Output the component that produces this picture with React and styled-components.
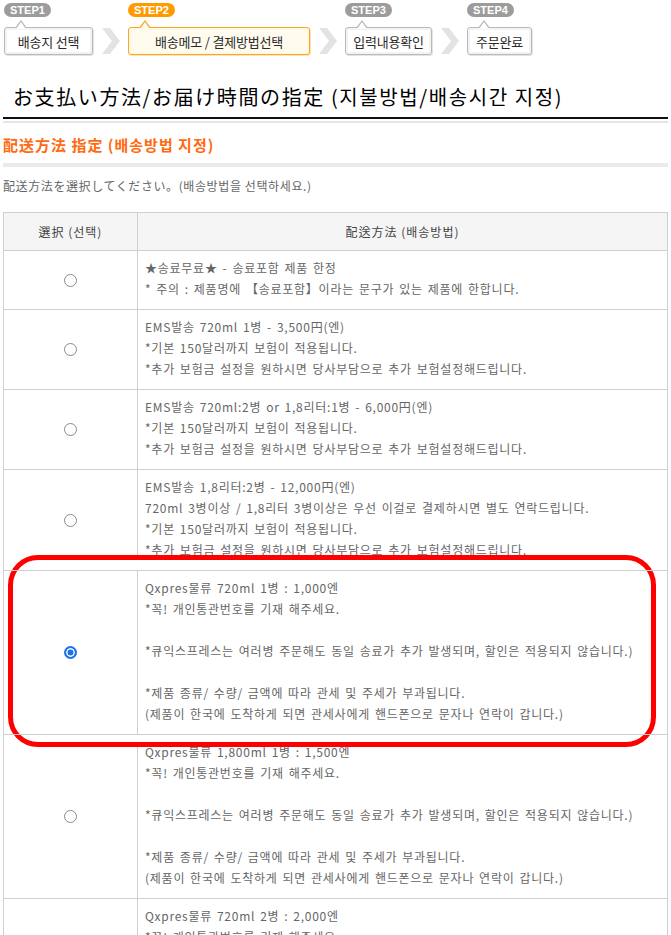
import React from "react";
import styled, { createGlobalStyle, css } from "styled-components";

const Global = createGlobalStyle`
  html, body { margin: 0; padding: 0; background: #fff; }
  body { font-family: "Noto Sans CJK KR", "Noto Sans CJK JP", sans-serif; }
  * { box-sizing: border-box; }
`;

const Page = styled.div`
  padding: 3px 3px 0 3px;
`;

const Steps = styled.div`
  display: flex;
  align-items: flex-end;
  padding-left: 1px;
`;

const Step = styled.div`
  display: flex;
  flex-direction: column;
  align-items: flex-start;
  gap: 10px;
`;

const Pill = styled.span`
  display: inline-block;
  height: 14px;
  line-height: 14px;
  padding: 0 6px;
  border-radius: 7px;
  font-family: "Liberation Sans", Arial, sans-serif;
  font-weight: bold;
  font-size: 11px;
  color: #fff;
  background: ${(p) => (p.$active ? "#ff9a00" : "#9c9c9c")};
`;

const StepBox = styled.div`
  position: relative;
  width: ${(p) => p.$w}px;
  height: 28px;
  border: 1px solid ${(p) => (p.$active ? "#f7a628" : "#b9b9b9")};
  border-radius: 3px;
  background: ${(p) => (p.$active ? "#fffcef" : "#fff")};
  box-shadow: inset 0 0 0 2px ${(p) => (p.$active ? "#fff8e4" : "#f3f3f3")},
    1px 1px 0 ${(p) => (p.$active ? "#fde3b8" : "#e4e4e4")};
  display: flex;
  align-items: center;
  justify-content: center;
  font-size: 13px;
  letter-spacing: -0.2px;
  color: #2a2a2a;
  &::before,
  &::after {
    content: "";
    position: absolute;
    width: 0;
    height: 0;
    border-style: solid;
  }
  &::before {
    left: 10px;
    top: -8px;
    border-width: 0 6px 8px 6px;
    border-color: transparent transparent
      ${(p) => (p.$active ? "#f7a628" : "#b9b9b9")} transparent;
  }
  &::after {
    left: 11px;
    top: -6px;
    border-width: 0 5px 7px 5px;
    border-color: transparent transparent
      ${(p) => (p.$active ? "#fffcef" : "#fff")} transparent;
  }
`;

const Chevron = styled.div`
  width: 35px;
  height: 28px;
  display: flex;
  align-items: center;
  justify-content: center;
`;

const Title = styled.h1`
  margin: 30px 0 0 0;
  padding: 0 0 8px 10px;
  font-family: "Noto Sans CJK JP", "Noto Sans CJK KR", sans-serif;
  font-weight: normal;
  font-size: 20px;
  line-height: 24px;
  letter-spacing: 1.6px;
  color: #000;
  border-bottom: 2px solid #111;
  box-shadow: 0 2px 0 #fff, 0 4px 0 #e6e6e6;
`;

const SubTitle = styled.h2`
  margin: 16px 0 0 0;
  padding: 0 0 8px 0;
  font-family: "Noto Sans CJK JP", "Noto Sans CJK KR", sans-serif;
  font-weight: bold;
  font-size: 15px;
  line-height: 20px;
  letter-spacing: 1px;
  color: #ff6a10;
  border-bottom: 4px solid #ebebeb;
`;

const Desc = styled.p`
  margin: 11px 0 0 0;
  font-family: "Noto Sans CJK JP", "Noto Sans CJK KR", sans-serif;
  font-size: 12px;
  line-height: 16px;
  letter-spacing: 0.6px;
  color: #666;
`;

const Table = styled.div`
  margin-top: 18px;
  border: 1px solid #cfcfcf;
  border-bottom: none;
`;

const Row = styled.div`
  display: grid;
  grid-template-columns: 134px 1fr;
  ${(p) =>
    p.$selected &&
    css`
      position: relative;
      z-index: 1;
      margin-top: -1px;
      & > div {
        border-top: 1px solid #cfcfcf;
      }
      &::before {
        content: "";
        position: absolute;
        z-index: -1;
        top: -15px;
        bottom: -12px;
        left: 4px;
        right: 11px;
        border: 5px solid #ff0000;
        border-radius: 30px;
        background: #fff;
      }
    `}
`;

const HeadCell = styled.div`
  height: 38px;
  display: flex;
  align-items: center;
  justify-content: center;
  background: #f5f5f5;
  border-bottom: 1px solid #cfcfcf;
  border-right: ${(p) => (p.$first ? "1px solid #cfcfcf" : "none")};
  font-size: 12px;
  letter-spacing: 1px;
  color: #444;
`;

const PickCell = styled.div`
  display: flex;
  align-items: center;
  justify-content: center;
  border-right: 1px solid #cfcfcf;
  border-bottom: 1px solid #cfcfcf;
`;

const InfoCell = styled.div`
  padding: 6px 7px 10px 7px;
  border-bottom: 1px solid #cfcfcf;
  font-size: 12px;
  line-height: 21px;
  letter-spacing: 0.75px;
  word-spacing: 1.5px;
  color: #666;
`;

const Line = styled.div`
  height: 21px;
  white-space: nowrap;
`;

const Radio = styled.input.attrs({ type: "radio" })`
  appearance: none;
  -webkit-appearance: none;
  margin: 0;
  width: 13px;
  height: 13px;
  border-radius: 50%;
  border: 1px solid #8a8a8a;
  background: #fff;
  &:checked {
    border: 2px solid #1a73e8;
    background: #1a73e8;
    box-shadow: inset 0 0 0 1.5px #fff;
  }
`;

const steps = [
  { label: "STEP1", text: "배송지 선택", w: 89 },
  { label: "STEP2", text: "배송메모 / 결제방법선택", w: 182, active: true },
  { label: "STEP3", text: "입력내용확인", w: 87 },
  { label: "STEP4", text: "주문완료", w: 65 },
];

const ems1 = "*기본 150달러까지 보험이 적용됩니다.";
const ems2 = "*추가 보험금 설정을 원하시면 당사부담으로 추가 보험설정해드립니다.";
const qx = [
  "*꼭! 개인통관번호를 기재 해주세요.",
  "",
  "*큐익스프레스는 여러병 주문해도 동일 송료가 추가 발생되며, 할인은 적용되지 않습니다.)",
  "",
  "*제품 종류/ 수량/ 금액에 따라 관세 및 주세가 부과됩니다.",
  "(제품이 한국에 도착하게 되면 관세사에게 핸드폰으로 문자나 연락이 갑니다.)",
];

const rows = [
  ["★송료무료★ - 송료포함 제품 한정", "* 주의 : 제품명에 【송료포함】이라는 문구가 있는 제품에 한합니다."],
  ["EMS발송 720ml 1병 - 3,500円(엔)", ems1, ems2],
  ["EMS발송 720ml:2병 or 1,8리터:1병 - 6,000円(엔)", ems1, ems2],
  [
    "EMS발송 1,8리터:2병 - 12,000円(엔)",
    "720ml 3병이상 / 1,8리터 3병이상은 우선 이걸로 결제하시면 별도 연락드립니다.",
    ems1,
    ems2,
  ],
  ["Qxpres물류 720ml 1병 : 1,000엔", ...qx],
  ["Qxpres물류 1,800ml 1병 : 1,500엔", ...qx],
  ["Qxpres물류 720ml 2병 : 2,000엔", ...qx],
];

const ChevronIcon = () => (
  <svg width="18" height="26" viewBox="0 0 18 26">
    <polygon points="0,0 8,0 18,13 8,26 0,26 10,13" fill="#e3e3e3" />
  </svg>
);

export default function App() {
  return (
    <>
      <Global />
      <Page>
        <Steps>
          {steps.map((s, i) => (
            <React.Fragment key={s.label}>
              {i > 0 && (
                <Chevron>
                  <ChevronIcon />
                </Chevron>
              )}
              <Step>
                <Pill $active={s.active}>{s.label}</Pill>
                <StepBox $active={s.active} $w={s.w}>
                  {s.text}
                </StepBox>
              </Step>
            </React.Fragment>
          ))}
        </Steps>

        <Title>お支払い方法/お届け時間の指定 (지불방법/배송시간 지정)</Title>
        <SubTitle>配送方法 指定 (배송방법 지정)</SubTitle>
        <Desc>配送方法を選択してください。(배송방법을 선택하세요.)</Desc>

        <Table>
          <Row>
            <HeadCell $first>選択 (선택)</HeadCell>
            <HeadCell>配送方法 (배송방법)</HeadCell>
          </Row>
          {rows.map((lines, i) => (
            <Row key={i} $selected={i === 4}>
              <PickCell>
                <Radio name="delivery" defaultChecked={i === 4} />
              </PickCell>
              <InfoCell>
                {lines.map((l, j) => (
                  <Line key={j}>{l}</Line>
                ))}
              </InfoCell>
            </Row>
          ))}
        </Table>
      </Page>
    </>
  );
}
